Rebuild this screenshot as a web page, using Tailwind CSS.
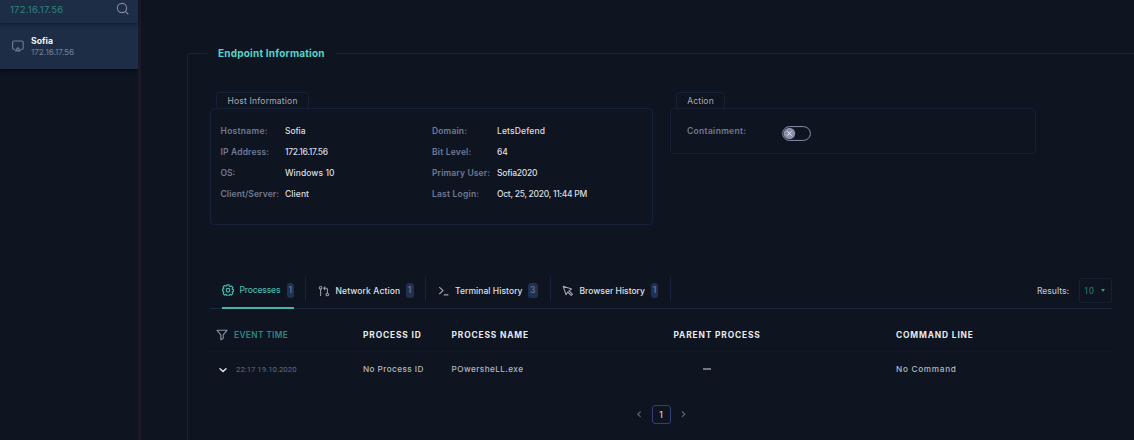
<!DOCTYPE html>
<html lang="en">
<head>
<meta charset="utf-8">
<title>Endpoint Information</title>
<script src="https://cdn.jsdelivr.net/npm/@tailwindcss/browser@4"></script>
</head>
<body class="h-[440px] w-[1134px] overflow-hidden bg-[#0e1420] font-['Inter',sans-serif] text-[8.5px] leading-[12px] whitespace-nowrap">
<div class="flex h-[440px] overflow-hidden">
  <aside class="w-[138px] shrink-0 bg-[#0e1420]">
    <div class="relative z-10 flex h-[23px] items-start bg-[#1d2d45] pl-[10px] pr-[9px] pt-[3px] shadow-[0_1px_4px_#0e1526]">
      <span class="flex-1 text-[9.5px] leading-[14px] tracking-[0.22px] text-[#2f8580]">172.16.17.56</span>
      <svg class="-mt-px h-[13px] w-[13px]" viewBox="0 0 13 13" fill="none" stroke="#8388a0" stroke-width="1.1" stroke-linecap="round"><circle cx="6" cy="6" r="4.6"/><path d="M9.4 9.4L12 12"/></svg>
    </div>
    <div class="flex h-[46px] items-center bg-[#1d2d45] pl-[12px] shadow-[0_2px_3px_#080c18]">
      <svg class="h-[12px] w-[12px]" viewBox="0 0 12 12" fill="none" stroke="#747b97" stroke-width="1.1" stroke-linejoin="round" stroke-linecap="round"><path d="M2.8 9.3H2A1.4 1.4 0 0 1 .6 7.9V2.4A1.4 1.4 0 0 1 2 1h7.8a1.4 1.4 0 0 1 1.4 1.4v5.5a1.4 1.4 0 0 1-1.4 1.4H9"/><path d="M5.9 7.6L8.2 10.9H3.6Z"/></svg>
      <div class="ml-[7px]">
        <div class="text-[8.7px] leading-[12px] font-bold text-[#f1f3f7]">Sofia</div>
        <div class="text-[8.2px] leading-[11px] tracking-[-0.05px] text-[#74809c]">172.16.17.56</div>
      </div>
    </div>
  </aside>
  <div class="w-[3px] shrink-0 bg-[#1d1929]"></div>

  <main class="min-w-0 flex-1 pl-[46px] pt-[46px]">
    <fieldset class="h-[394px] min-w-0 rounded-tl-[3px] border-t border-l border-[#1a2138] pl-[19px]">
      <legend class="px-[11px] text-[10px] leading-[14px] font-bold tracking-[0.2px] text-[#56d3cb]">Endpoint Information</legend>

      <div class="ml-[3px] mt-[32px] flex h-[134px] items-start gap-[17px]">
        <section class="w-[443px]">
          <h2 class="ml-[6px] h-[17px] w-[93px] rounded-[3px] border border-[#16213a] text-center text-[8.5px] leading-[16px] tracking-[0.21px] text-[#a8abb3]">Host Information</h2>
          <div class="-mt-px grid h-[117px] grid-cols-[64.5px_147px_65px_1fr] content-start rounded-[4px] border border-[#16213a] pl-[9.5px] pt-[12px] leading-[21px] font-medium text-[#dcdee2]">
            <span class="font-semibold tracking-[0.29px] text-[#717b95]">Hostname:</span><span class="tracking-[-0.09px]">Sofia</span>
            <span class="font-semibold tracking-[0.15px] text-[#717b95]">Domain:</span><span class="tracking-[0.15px]">LetsDefend</span>
            <span class="font-semibold tracking-[0.16px] text-[#717b95]">IP Address:</span><span class="tracking-[-0.3px]">172.16.17.56</span>
            <span class="font-semibold tracking-[0.2px] text-[#717b95]">Bit Level:</span><span>64</span>
            <span class="font-semibold text-[#717b95]">OS:</span><span class="tracking-[0.06px]">Windows 10</span>
            <span class="font-semibold tracking-[0.13px] text-[#717b95]">Primary User:</span><span class="tracking-[-0.22px]">Sofia2020</span>
            <span class="font-semibold tracking-[0.1px] text-[#717b95]">Client/Server:</span><span class="tracking-[0.1px]">Client</span>
            <span class="font-semibold tracking-[0.21px] text-[#717b95]">Last Login:</span><span class="tracking-[-0.28px]">Oct, 25, 2020, 11:44 PM</span>
          </div>
        </section>
        <section class="w-[366px]">
          <h2 class="ml-[6px] h-[17px] w-[49px] rounded-[3px] border border-[#16213a] text-center text-[8.5px] leading-[16px] tracking-[0.16px] text-[#a8abb3]">Action</h2>
          <div class="-mt-px flex h-[46px] items-center rounded-[4px] border border-[#191f36] pl-[16px]">
            <span class="w-[95px] font-semibold tracking-[0.31px] text-[#717b95]">Containment:</span>
            <svg class="mt-[4px] h-[15px] w-[29px]" viewBox="0 0 29 15" fill="none"><rect x=".6" y=".6" width="27.8" height="13.8" rx="6.9" stroke="#8b91ab"/><circle cx="7.4" cy="7.5" r="5.8" fill="#8b91ab"/><path d="M5.3 5.4l4.2 4.2M9.5 5.4L5.3 9.6" stroke="#f0f1f6"/></svg>
          </div>
        </section>
      </div>

      <div class="ml-[3px] mt-[51px] w-[902px]">
        <nav class="flex h-[32px] items-start border-b border-[#1a2740] font-medium text-[#dfe1e5]">
          <div class="ml-[12px] flex h-[32px] w-[72px] items-center border-b-2 border-[#43b5ab] pb-[4px] text-[#46b8ae]">
            <svg class="h-[12px] w-[12px] shrink-0" viewBox="0 0 24 24" fill="none" stroke="currentColor" stroke-width="2.4" stroke-linejoin="round"><path d="M9.8 1.600h4.400l.6 3 1.600.7 2.300-1.400 3 3-1.400 2.300.7 1.600 2.400.6v3.200l-2.400.6-.7 1.600 1.400 2.300-3 3-2.300-1.400-1.600.7-.6 2.600H9.800l-.6-2.600-1.600-.7-2.300 1.400-3-3 1.400-2.300-.7-1.600L.9 13.600v-3.200l2.100-.6.7-1.600-1.400-2.300 3-3 2.300 1.400 1.600-.7z"/><circle cx="12" cy="12.500" r="3.600"/></svg>
            <span class="ml-[5.5px] w-[47px] shrink-0 tracking-[-0.17px]">Processes</span>
            <span class="h-[15px] w-[7.5px] shrink-0 rounded-[3px] bg-[#1f3050] text-center leading-[15px] text-[#6c7a99]">1</span>
          </div>
          <div class="ml-[11px] flex h-[24px] w-[120px] items-center border-l border-[#192440] pl-[12px] pt-[3px]">
            <svg class="h-[12px] w-[12px] shrink-0" viewBox="0 0 12 12" fill="none" stroke="#9699a7" stroke-width="1.1" stroke-linejoin="round"><circle cx="2.6" cy="2.8" r="1.3"/><path d="M2.6 4.100V11M5.800 3.300h2.400a1.200 1.200 0 0 1 1.200 1.200v3.700M7.200 1.700L5.700 3.300l1.500 1.600"/><circle cx="9.3" cy="9.5" r="1.3"/></svg>
            <span class="ml-[5.5px] w-[70px] shrink-0 tracking-[0.11px]">Network Action</span>
            <span class="h-[15px] w-[8px] shrink-0 rounded-[3px] bg-[#1f3050] text-center leading-[15px] text-[#6c7a99]">1</span>
          </div>
          <div class="flex h-[24px] w-[124.5px] items-center border-l border-[#192440] pl-[12px] pt-[3px]">
            <svg class="h-[12px] w-[12px] shrink-0" viewBox="0 0 12 12" fill="none" stroke="#a2a6b2" stroke-width="1.100"><path d="M1.300 2.200L5 5.600 1.300 9M5.800 9.900h4.600"/></svg>
            <span class="ml-[5px] w-[73px] shrink-0 tracking-[0.06px]">Terminal History</span>
            <span class="h-[15px] w-[9.5px] shrink-0 rounded-[3px] bg-[#1f3050] text-center leading-[15px] text-[#6c7a99]">3</span>
          </div>
          <div class="flex h-[24px] w-[121px] items-center border-x border-[#192440] pl-[11px] pt-[3px]">
            <svg class="h-[12px] w-[12px] shrink-0" viewBox="0 0 12 12" fill="none" stroke="#a2a6b2" stroke-width="1.1" stroke-linejoin="round"><path d="M1.200 1.300L9.600 4.100 6.900 5.900 10.400 9.200 9.200 10.400 5.700 7 4 9.700Z"/></svg>
            <span class="ml-[6px] w-[71.5px] shrink-0 tracking-[0.02px]">Browser History</span>
            <span class="h-[15px] w-[7px] shrink-0 rounded-[3px] bg-[#1f3050] text-center leading-[15px] text-[#6c7a99]">1</span>
          </div>
          <div class="ml-auto mt-px flex h-[25px] items-center">
            <span class="mr-[10px] tracking-[-0.04px] text-[#b9bcc4]">Results:</span>
            <div class="flex h-[25px] w-[33px] items-center justify-between rounded-[2px] border border-[#172134] pl-[4px] pr-[6px] font-['Roboto',sans-serif] text-[8.5px] font-normal tracking-[0.1px] text-[#2a827a]">10<span class="border-x-[2.5px] border-t-[3px] border-x-transparent border-t-[#2d9a8e]"></span></div>
          </div>
        </nav>

        <div class="grid h-[43px] grid-cols-[24px_129px_88.5px_222px_222.5px_1fr] items-center border-b border-[#10182b] pt-[10px] text-[8.4px] font-bold tracking-[0.86px] text-[#e9ebee]">
          <svg class="ml-[6px] h-[12px] w-[12px]" viewBox="0 0 12 12" fill="none" stroke="#8b90a3" stroke-width="1.100" stroke-linejoin="round"><path d="M1 1.300H11L7.200 5.900V9.300L4.800 10.900V5.900Z"/></svg>
          <span class="text-[8.3px] font-semibold tracking-[0.38px] text-[#2d8880]">EVENT TIME</span>
          <span>PROCESS ID</span><span>PROCESS NAME</span><span>PARENT PROCESS</span><span>COMMAND LINE</span>
        </div>
        <div class="grid h-[33px] grid-cols-[26px_127px_88.5px_222px_222.5px_1fr] items-center text-[8.2px] font-medium tracking-[0.43px] text-[#b5b8c0]">
          <svg class="ml-[8px] mt-[3px] h-[10px] w-[10px]" viewBox="0 0 10 10" fill="none" stroke="#e8eaee" stroke-width="1.4" stroke-linecap="round" stroke-linejoin="round"><path d="M2 3.800L5 6.500 8 3.800"/></svg>
          <span class="mt-[3px] font-['Roboto',sans-serif] text-[7.8px] font-normal tracking-normal text-[#646d86]">22:17 19.10.2020</span>
          <span>No Process ID</span><span>POwersheLL.exe</span>
          <span class="ml-[29px] mt-px h-[1.5px] w-[8px] bg-[#73767f]"></span>
          <span class="tracking-[0.72px]">No Command</span>
        </div>
        <div class="mt-[19px] flex h-[20px] items-center justify-center gap-[8px]">
          <svg class="h-[8px] w-[8px]" viewBox="0 0 8 8" fill="none" stroke="#60646f" stroke-width="1.2"><path d="M4.600 1.500L1.800 4.200 4.600 6.900"/></svg>
          <span class="h-[19px] w-[19px] rounded-[3px] border border-[#343c7c] text-center leading-[18px] font-medium text-[#d4d6dd]">1</span>
          <svg class="h-[8px] w-[8px]" viewBox="0 0 8 8" fill="none" stroke="#60646f" stroke-width="1.2"><path d="M3 1.500L5.800 4.200 3 6.900"/></svg>
        </div>
      </div>
    </fieldset>
  </main>
</div>
</body>
</html>
